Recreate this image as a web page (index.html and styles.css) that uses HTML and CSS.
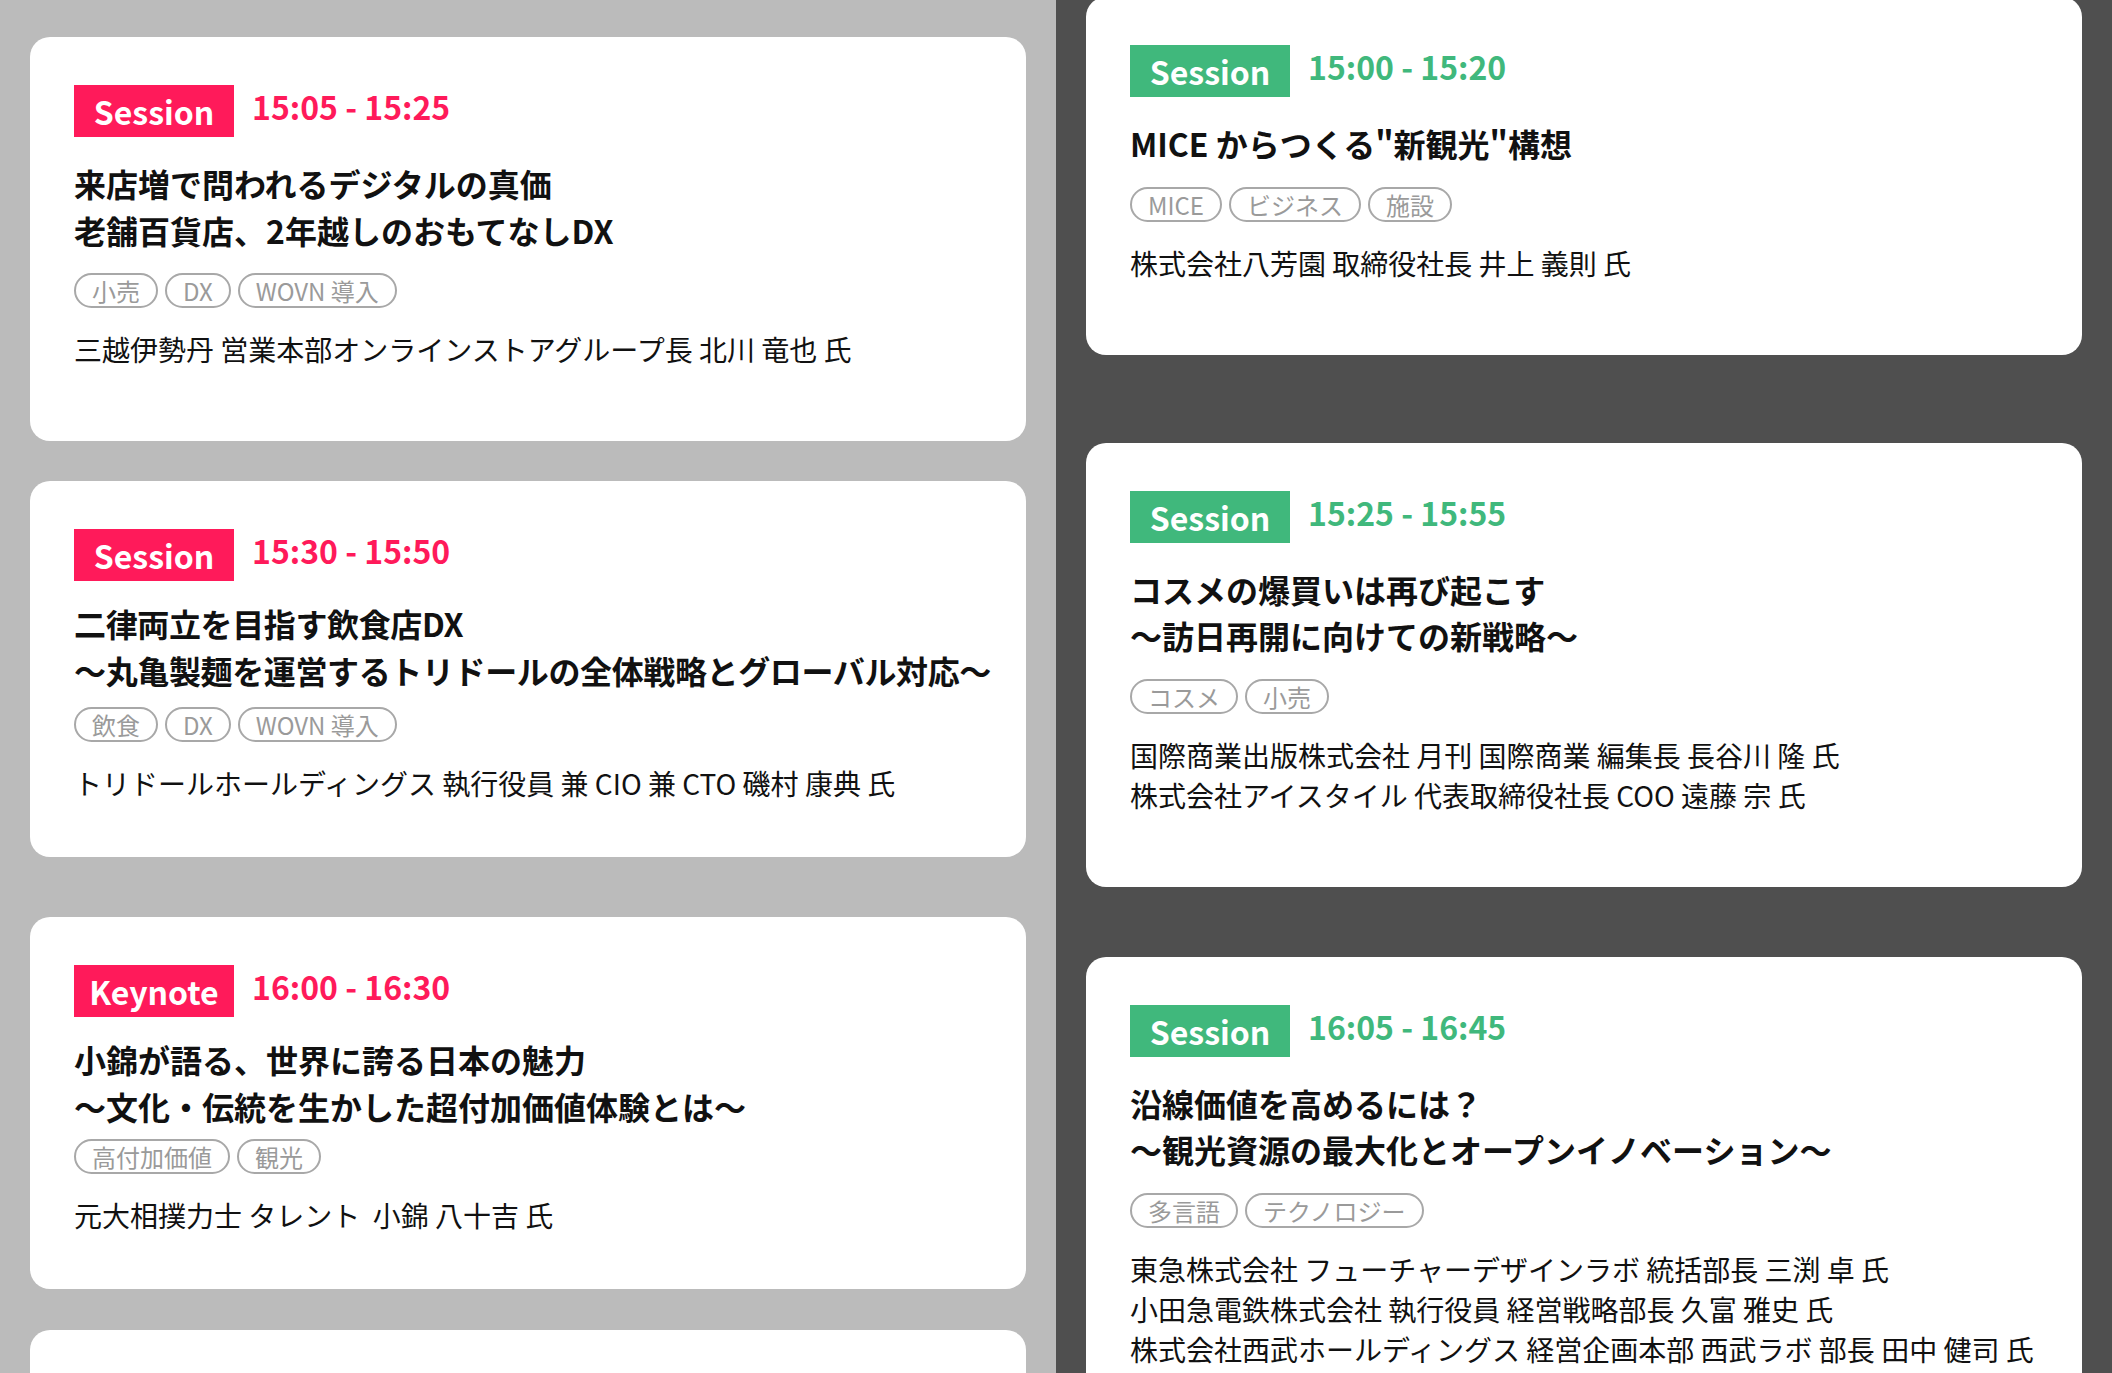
FILE: index.html
```html
<!DOCTYPE html>
<html lang="ja">
<head>
<meta charset="utf-8">
<title>Sessions</title>
<link rel="stylesheet" href="styles.css">
</head>
<body>
<div class="board">
  <div class="column column--light">
    <article class="card card--pink">
      <div class="card__head"><span class="badge">Session</span><span class="time">15:05 - 15:25</span></div>
      <h2 class="title">来店増で問われるデジタルの真価<br>老舗百貨店、2年越しのおもてなしDX</h2>
      <ul class="tags"><li class="tag">小売</li><li class="tag">DX</li><li class="tag">WOVN 導入</li></ul>
      <p class="speaker">三越伊勢丹 営業本部オンラインストアグループ長 北川 竜也 氏</p>
    </article>
    <article class="card card--pink card--compact card--gap40">
      <div class="card__head"><span class="badge">Session</span><span class="time">15:30 - 15:50</span></div>
      <h2 class="title title--tight">二律両立を目指す飲食店DX<br>〜丸亀製麺を運営するトリドールの全体戦略とグローバル対応〜</h2>
      <ul class="tags tags--mid"><li class="tag">飲食</li><li class="tag">DX</li><li class="tag">WOVN 導入</li></ul>
      <p class="speaker">トリドールホールディングス 執行役員 兼 CIO 兼 CTO 磯村 康典 氏</p>
    </article>
    <article class="card card--pink card--compact card--gap60">
      <div class="card__head"><span class="badge">Keynote</span><span class="time">16:00 - 16:30</span></div>
      <h2 class="title">小錦が語る、世界に誇る日本の魅力<br>〜文化・伝統を生かした超付加価値体験とは〜</h2>
      <ul class="tags"><li class="tag">高付加価値</li><li class="tag">観光</li></ul>
      <p class="speaker">元大相撲力士 タレント&nbsp; 小錦 八十吉 氏</p>
    </article>
    <article class="card card--empty card--gap41"></article>
  </div>
  <div class="column column--dark">
    <article class="card card--green card--first">
      <div class="card__head"><span class="badge">Session</span><span class="time">15:00 - 15:20</span></div>
      <h2 class="title">MICE からつくる"新観光"構想</h2>
      <ul class="tags"><li class="tag">MICE</li><li class="tag">ビジネス</li><li class="tag">施設</li></ul>
      <p class="speaker">株式会社八芳園 取締役社長 井上 義則 氏</p>
    </article>
    <article class="card card--green card--gap88">
      <div class="card__head"><span class="badge">Session</span><span class="time">15:25 - 15:55</span></div>
      <h2 class="title">コスメの爆買いは再び起こす<br>〜訪日再開に向けての新戦略〜</h2>
      <ul class="tags"><li class="tag">コスメ</li><li class="tag">小売</li></ul>
      <p class="speaker">国際商業出版株式会社 月刊 国際商業 編集長 長谷川 隆 氏<br>株式会社アイスタイル 代表取締役社長 COO 遠藤 宗 氏</p>
    </article>
    <article class="card card--green card--gap70">
      <div class="card__head"><span class="badge">Session</span><span class="time">16:05 - 16:45</span></div>
      <h2 class="title">沿線価値を高めるには？<br>〜観光資源の最大化とオープンイノベーション〜</h2>
      <ul class="tags"><li class="tag">多言語</li><li class="tag">テクノロジー</li></ul>
      <p class="speaker">東急株式会社 フューチャーデザインラボ 統括部長 三渕 卓 氏<br>小田急電鉄株式会社 執行役員 経営戦略部長 久富 雅史 氏<br>株式会社西武ホールディングス 経営企画本部 西武ラボ 部長 田中 健司 氏</p>
    </article>
  </div>
</div>
</body>
</html>
```

FILE: styles.css
```css
* { box-sizing: border-box; }
html, body {
  margin: 0;
  padding: 0;
  height: 1373px;
  overflow: hidden;
}
body {
  font-family: "Noto Sans CJK JP", "Noto Sans", sans-serif;
  color: #111;
}
.board {
  display: flex;
  height: 1373px;
}
.column {
  flex: 1 1 0;
  padding: 0 30px;
  overflow: hidden;
  display: flex;
  flex-direction: column;
}
.column--light { background: #bbbbbb; padding-top: 37px; }
.column--dark { background: #4f4f4f; }

.card {
  flex: none;
  background: #fff;
  border-radius: 20px;
  padding: 48px 30px 72px 44px;
}
.card--compact { padding-bottom: 54px; }
.card--first { margin-top: -3px; }
.card--gap40 { margin-top: 40px; }
.card--gap41 { margin-top: 41px; }
.card--gap60 { margin-top: 60px; }
.card--gap70 { margin-top: 70px; }
.card--gap88 { margin-top: 88px; }
.card--empty { min-height: 300px; }

.card__head {
  display: flex;
  align-items: flex-start;
  gap: 18px;
}
.badge {
  display: inline-flex;
  align-items: center;
  justify-content: center;
  width: 160px;
  height: 52px;
  color: #fff;
  font-weight: 700;
  font-size: 32px;
  line-height: 1;
}
.time {
  font-weight: 700;
  font-size: 32px;
  line-height: 1;
  margin-top: 5px;
}
.card--pink .badge { background: #ff1a5a; }
.card--pink .time { color: #ff1a5a; }
.card--green .badge { background: #40b87c; }
.card--green .time { color: #40b87c; }

.title {
  margin: 23px 0 0;
  font-size: 32px;
  font-weight: 700;
  line-height: 46.5px;
  color: #111;
  white-space: nowrap;
}
.card--compact .title { margin-top: 19px; }
.title--tight { letter-spacing: -0.37px; }
.tags {
  list-style: none;
  margin: 20px 0 0;
  padding: 0;
  display: flex;
  gap: 7px;
}
.card--compact .tags { margin-top: 10px; }
.card--compact .tags--mid { margin-top: 14px; }
.tag {
  height: 35px;
  border: 2px solid #a8a8a8;
  border-radius: 18px;
  padding: 0 16px;
  color: #9a9a9a;
  font-size: 24px;
  line-height: 31px;
  white-space: nowrap;
}
.speaker {
  margin: 21px 0 0;
  font-size: 28px;
  font-weight: 400;
  line-height: 40px;
  color: #111;
}
```
